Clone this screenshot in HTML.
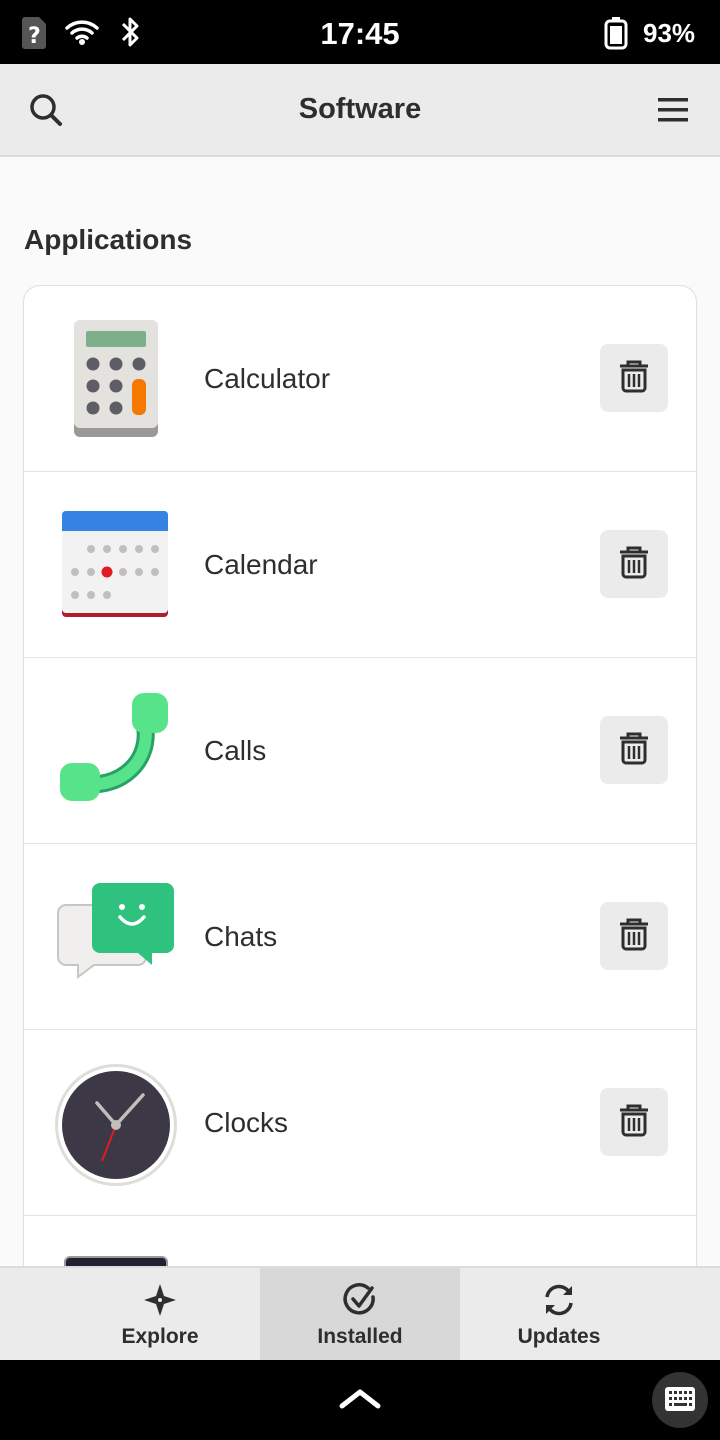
<!DOCTYPE html>
<html><head><meta charset="utf-8"><style>
*{margin:0;padding:0;box-sizing:border-box}
body{width:720px;height:1440px;overflow:hidden;background:#fafafa;font-family:"Liberation Sans","DejaVu Sans",sans-serif;position:relative;color:#2e2e2e}
.abs{position:absolute}
.status{top:0;left:0;width:720px;height:64px;background:#000;color:#fff}
.header{top:64px;left:0;width:720px;height:93px;background:#ebebeb;border-bottom:2px solid #dadada}
.card{top:286px;left:24px;width:672px;height:1100px;background:#fff;border-radius:16px;box-shadow:0 0 0 1px #e0e0e0,0 1px 3px rgba(0,0,0,.08)}
.row{position:absolute;left:0;width:672px;height:186px;border-bottom:1px solid #e4e4e4}
.name{position:absolute;left:180px;top:77px;font-size:28px;color:#2e2e2e;font-family:"Liberation Sans",sans-serif}
.trash{position:absolute;left:576px;top:58px;width:68px;height:68px;background:#ebebeb;border-radius:8px}
.icon{position:absolute;left:30px;top:33px;width:124px;height:124px}
.tabs{top:1266px;left:0;width:720px;height:94px;background:#ebebeb;border-top:2px solid #dcdcdc}
.tab{position:absolute;top:0;width:200px;height:94px;text-align:center;font-family:"Liberation Sans",sans-serif;font-weight:bold;font-size:21px}
.tab span{position:absolute;left:0;right:0;top:57px}
.nav{top:1360px;left:0;width:720px;height:80px;background:#000}
</style></head><body>
<div class="abs status">
<svg class="abs" style="left:20px;top:16px" width="30" height="34" viewBox="0 0 30 34"><path d="M2 4a3 3 0 0 1 3-3h14l7 7v22a3 3 0 0 1-3 3H5a3 3 0 0 1-3-3z" fill="#555"/><text x="8" y="27" fill="#fff" font-size="22" font-weight="bold" font-family="DejaVu Sans">?</text></svg>
<svg class="abs" style="left:64px;top:18px" width="36" height="28" viewBox="0 0 36 28"><path d="M3 10a22 22 0 0 1 30 0M8 15a15 15 0 0 1 20 0M13 20a8 8 0 0 1 10 0" stroke="#fff" stroke-width="3.5" fill="none" stroke-linecap="round"/><circle cx="18" cy="24" r="3" fill="#fff"/></svg>
<svg class="abs" style="left:118px;top:14px" width="24" height="36" viewBox="0 0 24 36"><path d="M5 10l14 14-7 7V5l7 7L5 26" stroke="#fff" stroke-width="3" fill="none" stroke-linejoin="round"/></svg>
<div class="abs" style="left:0;width:720px;top:16px;text-align:center;font-size:31px;font-weight:bold">17:45</div>
<svg class="abs" style="left:603px;top:16px" width="26" height="34" viewBox="0 0 26 34"><rect x="9" y="1" width="8" height="4" fill="#fff"/><rect x="3" y="5" width="20" height="27" rx="4" fill="none" stroke="#fff" stroke-width="3"/><rect x="7" y="10" width="12" height="18" fill="#fff"/></svg>
<div class="abs" style="left:643px;top:18px;font-size:26px;font-weight:bold">93%</div>
</div>
<div class="abs header">
<svg class="abs" style="left:28px;top:28px" width="36" height="36" viewBox="0 0 36 36"><circle cx="15" cy="15" r="11" stroke="#2e2e2e" stroke-width="3.5" fill="none"/><path d="M23 23l9 9" stroke="#2e2e2e" stroke-width="4" stroke-linecap="round"/></svg>
<div class="abs" style="left:0;width:720px;top:29px;text-align:center;font-size:29px;font-weight:bold;color:#2e2e2e">Software</div>
<svg class="abs" style="left:658px;top:34px" width="32" height="26"><rect y="0" width="30" height="3.5" fill="#2e2e2e"/><rect y="10" width="30" height="3.5" fill="#2e2e2e"/><rect y="20" width="30" height="3.5" fill="#2e2e2e"/></svg>
</div>
<div class="abs" style="left:24px;top:224px;font-size:28px;font-weight:bold;color:#2e2e2e">Applications</div>
<div class="abs card">
<div class="row" style="top:0">
<svg class="icon" viewBox="0 0 124 124"><rect x="20" y="4" width="84" height="114" rx="6" fill="#9a9996"/><rect x="20" y="1" width="84" height="108" rx="6" fill="#e4e2de"/><rect x="32" y="12" width="60" height="16" rx="2" fill="#7bb08a"/><g fill="#5e5c64"><circle cx="39" cy="45" r="6.5"/><circle cx="62" cy="45" r="6.5"/><circle cx="85" cy="45" r="6.5"/><circle cx="39" cy="67" r="6.5"/><circle cx="62" cy="67" r="6.5"/><circle cx="39" cy="89" r="6.5"/><circle cx="62" cy="89" r="6.5"/></g><rect x="78" y="60" width="14" height="36" rx="6" fill="#f57900"/></svg>
<div class="name">Calculator</div><div class="trash"><svg width="68" height="68" viewBox="0 0 68 68"><path d="M20 22h28M28 22v-4h12v4M23 26h22v18a3 3 0 0 1-3 3H26a3 3 0 0 1-3-3z" stroke="#2e2e2e" stroke-width="3" fill="none"/><path d="M29 30v13M34 30v13M39 30v13" stroke="#2e2e2e" stroke-width="2.5"/></svg></div></div>
<div class="row" style="top:186px">
<svg class="icon" viewBox="0 0 124 124"><rect x="8" y="6" width="106" height="106" rx="4" fill="#b11c2f"/><rect x="8" y="6" width="106" height="102" rx="4" fill="#f2f2f2"/><path d="M8 10a4 4 0 0 1 4-4h98a4 4 0 0 1 4 4v16H8z" fill="#3584e4"/><g fill="#c0bfbc"><circle cx="37" cy="44" r="4"/><circle cx="53" cy="44" r="4"/><circle cx="69" cy="44" r="4"/><circle cx="85" cy="44" r="4"/><circle cx="101" cy="44" r="4"/><circle cx="21" cy="67" r="4"/><circle cx="37" cy="67" r="4"/><circle cx="69" cy="67" r="4"/><circle cx="85" cy="67" r="4"/><circle cx="101" cy="67" r="4"/><circle cx="21" cy="90" r="4"/><circle cx="37" cy="90" r="4"/><circle cx="53" cy="90" r="4"/></g><circle cx="53" cy="67" r="5.5" fill="#e01b24"/></svg>
<div class="name">Calendar</div><div class="trash"><svg width="68" height="68" viewBox="0 0 68 68"><path d="M20 22h28M28 22v-4h12v4M23 26h22v18a3 3 0 0 1-3 3H26a3 3 0 0 1-3-3z" stroke="#2e2e2e" stroke-width="3" fill="none"/><path d="M29 30v13M34 30v13M39 30v13" stroke="#2e2e2e" stroke-width="2.5"/></svg></div></div>
<div class="row" style="top:372px">
<svg class="icon" viewBox="0 0 124 124"><path d="M90 30c10 40-25 70-64 62" stroke="#26a269" stroke-width="18" fill="none" stroke-linecap="round"/><path d="M90 30c10 40-25 70-64 62" stroke="#57e389" stroke-width="12" fill="none" stroke-linecap="round"/><rect x="78" y="2" width="36" height="40" rx="12" fill="#57e389"/><rect x="6" y="72" width="40" height="38" rx="12" fill="#57e389"/></svg>
<div class="name">Calls</div><div class="trash"><svg width="68" height="68" viewBox="0 0 68 68"><path d="M20 22h28M28 22v-4h12v4M23 26h22v18a3 3 0 0 1-3 3H26a3 3 0 0 1-3-3z" stroke="#2e2e2e" stroke-width="3" fill="none"/><path d="M29 30v13M34 30v13M39 30v13" stroke="#2e2e2e" stroke-width="2.5"/></svg></div></div>
<div class="row" style="top:558px">
<svg class="icon" viewBox="0 0 124 124"><path d="M12 28h72a8 8 0 0 1 8 8v44a8 8 0 0 1-8 8H40l-16 12v-12H12a8 8 0 0 1-8-8V36a8 8 0 0 1 8-8z" fill="#f0efed" stroke="#c8c6c2" stroke-width="2"/><path d="M46 6h66a8 8 0 0 1 8 8v54a8 8 0 0 1-8 8h-14v12l-14-12H46a8 8 0 0 1-8-8V14a8 8 0 0 1 8-8z" fill="#2ec27e"/><circle cx="68" cy="30" r="3" fill="#fff"/><circle cx="88" cy="30" r="3" fill="#fff"/><path d="M66 40q12 14 24 0" stroke="#fff" stroke-width="3.5" fill="none" stroke-linecap="round"/></svg>
<div class="name">Chats</div><div class="trash"><svg width="68" height="68" viewBox="0 0 68 68"><path d="M20 22h28M28 22v-4h12v4M23 26h22v18a3 3 0 0 1-3 3H26a3 3 0 0 1-3-3z" stroke="#2e2e2e" stroke-width="3" fill="none"/><path d="M29 30v13M34 30v13M39 30v13" stroke="#2e2e2e" stroke-width="2.5"/></svg></div></div>
<div class="row" style="top:744px">
<svg class="icon" viewBox="0 0 124 124"><circle cx="62" cy="62" r="61" fill="#deddda"/><circle cx="62" cy="62" r="58" fill="#fff"/><circle cx="62" cy="62" r="54" fill="#3d3846"/><path d="M62 62L43 40M62 62l27-30" stroke="#c0bfbc" stroke-width="3.5" stroke-linecap="round"/><path d="M62 62L48 98" stroke="#e01b24" stroke-width="2"/><circle cx="62" cy="62" r="5" fill="#c0bfbc"/></svg>
<div class="name">Clocks</div><div class="trash"><svg width="68" height="68" viewBox="0 0 68 68"><path d="M20 22h28M28 22v-4h12v4M23 26h22v18a3 3 0 0 1-3 3H26a3 3 0 0 1-3-3z" stroke="#2e2e2e" stroke-width="3" fill="none"/><path d="M29 30v13M34 30v13M39 30v13" stroke="#2e2e2e" stroke-width="2.5"/></svg></div></div>
<div class="row" style="top:930px;border:none"><div class="abs" style="left:40px;top:40px;width:104px;height:30px;background:#241f31;border-radius:6px;border:2px solid #9a9996"></div></div>
</div>
<div class="abs tabs">
<div class="tab" style="left:60px"><svg class="abs" style="left:82px;top:14px" width="36" height="36" viewBox="0 0 36 36"><path d="M18 2l4 12 12 4-12 4-4 12-4-12-12-4 12-4z" fill="#2e2e2e"/><circle cx="18" cy="18" r="2" fill="#ebebeb"/></svg><span>Explore</span></div>
<div class="tab" style="left:260px;background:#d8d8d8"><svg class="abs" style="left:82px;top:14px" width="36" height="36" viewBox="0 0 36 36"><path d="M26 6A14 14 0 1 0 31 15" stroke="#2e2e2e" stroke-width="3.5" fill="none" stroke-linecap="round"/><path d="M11 17l6 7 13-18" stroke="#2e2e2e" stroke-width="3.5" fill="none" stroke-linecap="round" stroke-linejoin="round"/></svg><span>Installed</span></div>
<div class="tab" style="left:459px"><svg class="abs" style="left:82px;top:14px" width="36" height="36" viewBox="0 0 36 36"><path d="M6 15a12 12 0 0 1 22-5M30 21a12 12 0 0 1-22 5" stroke="#2e2e2e" stroke-width="3.5" fill="none"/><path d="M31 4v9h-9zM5 32v-9h9z" fill="#2e2e2e"/></svg><span>Updates</span></div>
</div>
<div class="abs nav">
<svg class="abs" style="left:338px;top:26px" width="44" height="26"><path d="M4 20L22 6l18 14" stroke="#fff" stroke-width="5" fill="none" stroke-linecap="round" stroke-linejoin="round"/></svg>
<div class="abs" style="left:652px;top:12px;width:56px;height:56px;border-radius:28px;background:#333"><svg class="abs" style="left:13px;top:15px" width="30" height="26"><rect width="30" height="24" rx="3" fill="#fff"/><g fill="#333"><rect x="4" y="4" width="3" height="3"/><rect x="9" y="4" width="3" height="3"/><rect x="14" y="4" width="3" height="3"/><rect x="19" y="4" width="3" height="3"/><rect x="24" y="4" width="3" height="3"/><rect x="4" y="10" width="3" height="3"/><rect x="9" y="10" width="3" height="3"/><rect x="14" y="10" width="3" height="3"/><rect x="19" y="10" width="3" height="3"/><rect x="24" y="10" width="3" height="3"/><rect x="4" y="16" width="3" height="3"/><rect x="9" y="16" width="13" height="3"/><rect x="24" y="16" width="3" height="3"/></g></svg></div>
</div>
</body></html>
